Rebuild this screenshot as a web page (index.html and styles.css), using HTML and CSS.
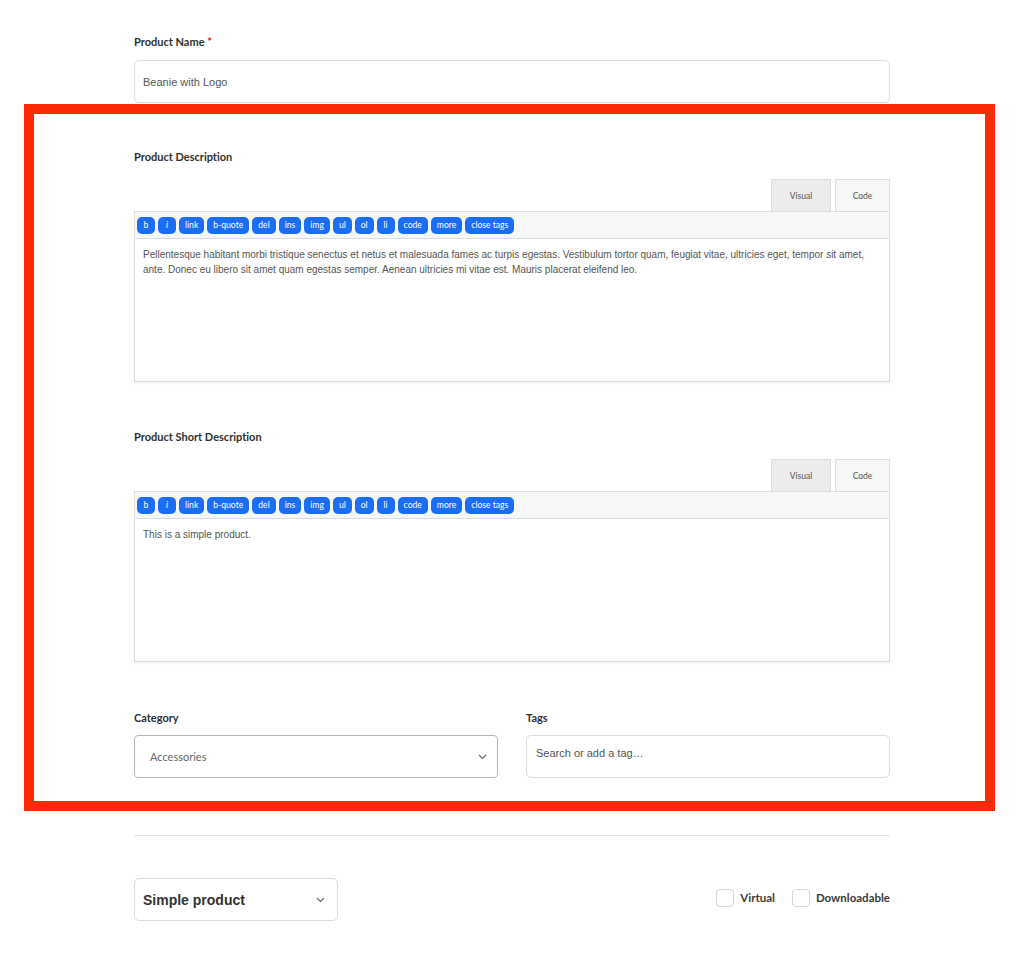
FILE: index.html
```html
<!DOCTYPE html>
<html lang="en">
<head>
    <meta charset="UTF-8">
    <meta name="viewport" content="width=device-width, initial-scale=1.0">
    <title>Edit Product</title>
    <link rel="stylesheet" href="styles.css">
</head>
<body>
    <div class="page">
        <div class="field">
            <label class="label">Product Name <span class="req">*</span></label>
            <div class="input">Beanie with Logo</div>
        </div>
    </div>

    <div class="highlight">
        <div class="field">
            <label class="label">Product Description</label>
            <div class="editor">
                <div class="tabs">
                    <span class="tab">Visual</span>
                    <span class="tab active">Code</span>
                </div>
                <div class="toolbar">
                    <span class="btn">b</span>
                    <span class="btn"><i>i</i></span>
                    <span class="btn">link</span>
                    <span class="btn">b-quote</span>
                    <span class="btn">del</span>
                    <span class="btn">ins</span>
                    <span class="btn">img</span>
                    <span class="btn">ul</span>
                    <span class="btn">ol</span>
                    <span class="btn">li</span>
                    <span class="btn">code</span>
                    <span class="btn">more</span>
                    <span class="btn">close tags</span>
                </div>
                <div class="textarea">Pellentesque habitant morbi tristique senectus et netus et malesuada fames ac turpis egestas. Vestibulum tortor quam, feugiat vitae, ultricies eget, tempor sit amet, ante. Donec eu libero sit amet quam egestas semper. Aenean ultricies mi vitae est. Mauris placerat eleifend leo.</div>
            </div>
        </div>

        <div class="field spaced">
            <label class="label">Product Short Description</label>
            <div class="editor">
                <div class="tabs">
                    <span class="tab">Visual</span>
                    <span class="tab active">Code</span>
                </div>
                <div class="toolbar">
                    <span class="btn">b</span>
                    <span class="btn"><i>i</i></span>
                    <span class="btn">link</span>
                    <span class="btn">b-quote</span>
                    <span class="btn">del</span>
                    <span class="btn">ins</span>
                    <span class="btn">img</span>
                    <span class="btn">ul</span>
                    <span class="btn">ol</span>
                    <span class="btn">li</span>
                    <span class="btn">code</span>
                    <span class="btn">more</span>
                    <span class="btn">close tags</span>
                </div>
                <div class="textarea">This is a simple product.</div>
            </div>
        </div>

        <div class="row spaced">
            <div class="field">
                <label class="label">Category</label>
                <div class="select">
                    <span>Accessories</span>
                    <svg class="chev" width="9" height="6" viewBox="0 0 9 6"><path d="M1 1l3.5 3.5L8 1" fill="none" stroke="#666" stroke-width="1.1"/></svg>
                </div>
            </div>
            <div class="field">
                <label class="label">Tags</label>
                <div class="input tags">Search or add a tag…</div>
            </div>
        </div>
    </div>

    <div class="page">
        <hr class="divider">
        <div class="type-row">
            <div class="type-select">
                <span>Simple product</span>
                <svg class="chev" width="9" height="6" viewBox="0 0 9 6"><path d="M1 1l3.5 3.5L8 1" fill="none" stroke="#666" stroke-width="1.1"/></svg>
            </div>
            <div class="checks">
                <label class="check"><span class="box"></span>Virtual</label>
                <label class="check"><span class="box"></span>Downloadable</label>
            </div>
        </div>
    </div>
</body>
</html>
```

FILE: styles.css
```css
body {
    margin: 0;
    background-color: #fff;
    font-family: Lato, "Liberation Sans", sans-serif;
    font-variant-ligatures: none;
    color: #333;
}

.page {
    width: 756px;
    margin-left: 134px;
}

.page:first-child {
    padding-top: 34px;
}

.label {
    display: block;
    font-size: 11px;
    font-weight: 700;
    line-height: 16px;
    color: #2f2f2f;
}

.req {
    color: #e0202a;
}

.input {
    margin-top: 10px;
    height: 41px;
    border: 1px solid #dedede;
    border-radius: 5px;
    font-family: "Liberation Sans", Arial, sans-serif;
    font-size: 11px;
    color: #555;
    display: flex;
    align-items: center;
    padding: 0 8px;
}

/* annotation frame */
.highlight {
    margin: 1px 0 0 24px;
    width: 756px;
    border: 10px solid #fe2a05;
    padding: 35px 95px 23px 100px;
}

.spaced {
    margin-top: 47px;
}

.editor {
    margin-top: 14px;
}

.tabs {
    display: flex;
    justify-content: flex-end;
    gap: 4px;
    height: 32px;
}

.tab {
    width: 58px;
    border: 1px solid #dcdcde;
    border-bottom: none;
    background-color: #ececec;
    font-size: 8.5px;
    color: #555;
    display: flex;
    align-items: center;
    justify-content: center;
}

.tab.active {
    width: 53px;
    background-color: #f6f7f7;
}

.toolbar {
    height: 26px;
    border: 1px solid #dcdcde;
    background-color: #f6f7f7;
    display: flex;
    align-items: center;
    gap: 3px;
    padding: 0 2px;
}

.btn {
    height: 17px;
    min-width: 6px;
    padding: 0 6px;
    border-radius: 5px;
    background-color: #1b6df2;
    color: #fff;
    font-size: 8.6px;
    line-height: 17px;
    text-align: center;
}

.textarea {
    height: 126px;
    border: 1px solid #dcdcde;
    border-top: none;
    padding: 8px 10px 8px 8px;
    font-family: "Liberation Sans", Arial, sans-serif;
    font-size: 10px;
    line-height: 15px;
    color: #555;
    box-shadow: 0 1px 2px rgba(0, 0, 0, 0.06);
}

.row {
    display: flex;
    gap: 28px;
    margin-top: 48px;
}

.row .field {
    flex: 1;
}

.select {
    margin-top: 9px;
    height: 41px;
    border: 1px solid #b8b8b8;
    border-radius: 4px;
    display: flex;
    align-items: center;
    justify-content: space-between;
    padding: 0 10px 0 15px;
    font-size: 11px;
    color: #666;
}

.tags {
    margin-top: 9px;
    padding: 0 9px;
    align-items: flex-start;
    padding-top: 11px;
    height: 30px;
}

.divider {
    margin: 24px 0 0;
    border: none;
    border-top: 1px solid #e2e2e2;
}

.type-row {
    margin-top: 42px;
    display: flex;
    align-items: center;
    justify-content: space-between;
}

.type-select {
    width: 182px;
    height: 41px;
    border: 1px solid #dcdcdc;
    border-radius: 5px;
    display: flex;
    align-items: center;
    justify-content: space-between;
    padding: 0 12px 0 8px;
    font-family: "Liberation Sans", Arial, sans-serif;
    font-size: 14px;
    font-weight: 700;
    color: #333;
}

.checks {
    display: flex;
    gap: 17px;
    margin-bottom: 4px;
}

.check {
    display: flex;
    align-items: center;
    gap: 6px;
    font-size: 11.5px;
    font-weight: 700;
    color: #3a3a3a;
}

.box {
    width: 16px;
    height: 16px;
    border: 1px solid #d5d5d5;
    border-radius: 4px;
}
```
